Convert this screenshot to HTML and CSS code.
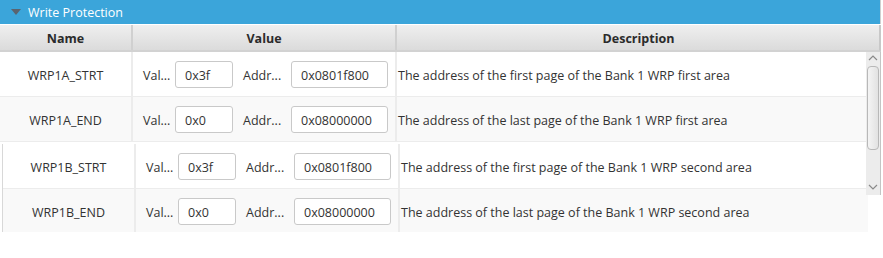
FILE: index.html
```html
<!DOCTYPE html>
<html lang="en">
<head>
  <meta charset="UTF-8">
  <title>Write Protection</title>
  <link rel="stylesheet" href="styles.css">
</head>
<body>
  <div class="panel">
    <div class="panel-title">
      <span class="arrow"></span>
      Write Protection
    </div>
    <div class="table">
      <div class="row head">
        <div class="cell name">Name</div>
        <div class="cell value">Value</div>
        <div class="cell desc">Description</div>
      </div>

      <div class="body">
        <div class="row">
          <div class="cell name">WRP1A_STRT</div>
          <div class="cell value">
            <span class="lbl val">Val...</span><span class="field small">0x3f</span>
            <span class="lbl addr">Addr...</span><span class="field big">0x0801f800</span>
          </div>
          <div class="cell desc">The address of the first page of the Bank 1 WRP first area</div>
        </div>
        <div class="row odd">
          <div class="cell name">WRP1A_END</div>
          <div class="cell value">
            <span class="lbl val">Val...</span><span class="field small">0x0</span>
            <span class="lbl addr">Addr...</span><span class="field big">0x08000000</span>
          </div>
          <div class="cell desc">The address of the last page of the Bank 1 WRP first area</div>
        </div>

        <div class="shifted">
          <div class="row">
            <div class="cell name">WRP1B_STRT</div>
            <div class="cell value">
              <span class="lbl val">Val...</span><span class="field small">0x3f</span>
              <span class="lbl addr">Addr...</span><span class="field big">0x0801f800</span>
            </div>
            <div class="cell desc">The address of the first page of the Bank 1 WRP second area</div>
          </div>
          <div class="row odd">
            <div class="cell name">WRP1B_END</div>
            <div class="cell value">
              <span class="lbl val">Val...</span><span class="field small">0x0</span>
              <span class="lbl addr">Addr...</span><span class="field big">0x08000000</span>
            </div>
            <div class="cell desc">The address of the last page of the Bank 1 WRP second area</div>
          </div>
        </div>

        <div class="scrollbar">
          <svg class="sb-arrow" width="14" height="12" viewBox="0 0 14 12">
            <path d="M3 8 L7 4 L11 8" fill="none" stroke="#8a8a8a" stroke-width="1.2"/>
          </svg>
          <div class="thumb"></div>
          <svg class="sb-arrow down" width="14" height="12" viewBox="0 0 14 12">
            <path d="M3 4 L7 8 L11 4" fill="none" stroke="#8a8a8a" stroke-width="1.2"/>
          </svg>
        </div>
      </div>
    </div>
  </div>
</body>
</html>
```

FILE: styles.css
```css
body {
  margin: 0;
  background: #ffffff;
  font-family: 'Open Sans', 'Noto Sans', sans-serif;
  font-size: 12.5px;
  color: #333333;
}

.panel {
  width: 881px;
}

.panel-title {
  height: 24px;
  background: #3ba5da;
  color: #ffffff;
  font-size: 12.5px;
  display: flex;
  align-items: center;
  padding-left: 11px;
  border-right: 1px solid #d0d0d0;
  box-sizing: border-box;
}

.arrow {
  width: 0;
  height: 0;
  border-left: 5px solid transparent;
  border-right: 5px solid transparent;
  border-top: 6px solid #5a6470;
  margin-right: 7px;
}

.table {
  margin-top: 1px;
}

.row {
  display: flex;
  height: 45px;
  width: 866px;
  background: #ffffff;
  border-bottom: 1px solid #ececec;
  box-sizing: border-box;
}

.row.odd {
  background: #f9f9f9;
}

.row.head {
  width: 881px;
  height: 27px;
  background: linear-gradient(#efefef, #dbdbdb);
  border-bottom: 2px solid #d2d2d2;
  border-right: 2px solid #c8c8c8;
  font-weight: bold;
  font-size: 12.5px;
  color: #2b2b2b;
}

.cell {
  display: flex;
  align-items: center;
  box-sizing: border-box;
}

.body .name,
.body .desc,
.body .lbl {
  padding-top: 2px;
}

.name {
  width: 133px;
  justify-content: center;
  border-right: 2px solid #ececec;
}

.value {
  width: 264px;
  padding-left: 10px;
  border-right: 2px solid #ececec;
}

.head .name,
.head .value {
  border-right: 2px solid #d0d0d0;
  justify-content: center;
  padding-left: 0;
}

.head .cell {
  padding-top: 1px;
}

.desc {
  flex: 1;
  padding-left: 1px;
  white-space: nowrap;
}

.head .desc {
  justify-content: center;
}

.lbl {
  white-space: nowrap;
}

.lbl.val {
  width: 32px;
}

.lbl.addr {
  width: 48px;
}

.field {
  height: 27px;
  border: 1px solid #c9c9c9;
  border-radius: 3px;
  background: #ffffff;
  box-sizing: border-box;
  display: flex;
  align-items: center;
  padding: 2px 0 0 9px;
}

.field.small {
  width: 58px;
  margin-right: 10px;
}

.field.big {
  width: 97px;
}

.body {
  position: relative;
}

.shifted {
  margin: 2px 0 0 2px;
  border-left: 1px solid #d8d8d8;
  width: 866px;
  height: 88px;
  overflow: hidden;
}

.shifted .row {
  width: 865px;
}

.scrollbar {
  position: absolute;
  left: 866px;
  top: 0;
  width: 15px;
  height: 143px;
  background: #ececec;
  border-right: 1px solid #c4c4c4;
  box-sizing: border-box;
}

.sb-arrow {
  display: block;
}

.sb-arrow.down {
  position: absolute;
  bottom: 2px;
  left: 0;
}

.thumb {
  margin: 2px 0 0 1px;
  width: 12px;
  height: 84px;
  background: linear-gradient(to right, #f4f4f4, #e2e2e2);
  border: 1px solid #b8b8b8;
  border-radius: 4px;
  box-sizing: border-box;
}
```
